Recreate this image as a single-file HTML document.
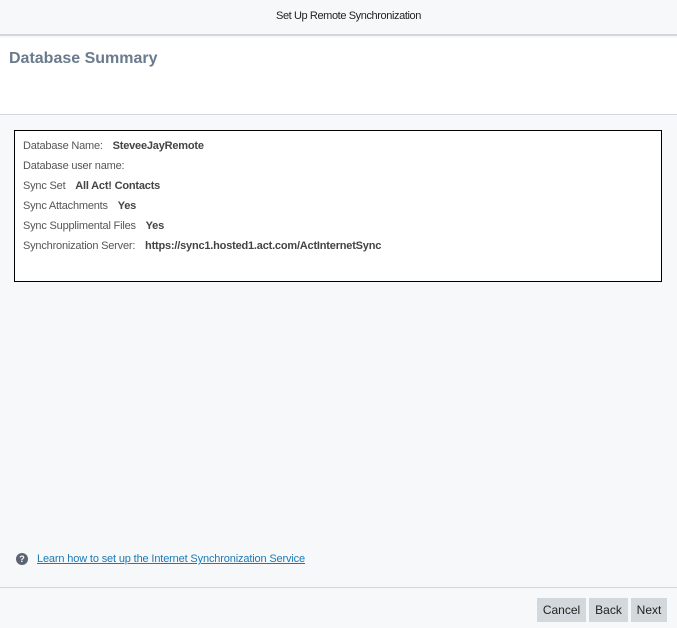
<!DOCTYPE html>
<html><head><style>
*{margin:0;padding:0;box-sizing:border-box}
body{width:677px;height:628px;background:#f7f8fa;font-family:"Liberation Sans",Arial,sans-serif;position:relative;overflow:hidden}
.hdr{position:absolute;left:0;top:0;width:677px;height:36px;background:#f7f8fa;border-bottom:2px solid #d4d6d9;text-align:center;font-size:11px;line-height:33px;color:#222;letter-spacing:-0.4px;padding-left:20px}
.white{position:absolute;left:0;top:38px;width:677px;height:77px;background:#fff;border-bottom:1px solid #d4d8dc}
.white h1{position:absolute;left:9px;top:12px;font-size:16px;font-weight:bold;color:#6b7a8c}
.box{position:absolute;left:14px;top:130px;width:648px;height:152px;border:1px solid #000;background:#fff}
.row{position:absolute;left:8px;font-size:11px;color:#555;white-space:nowrap;letter-spacing:-0.2px}
.row b{color:#444;margin-left:7px}
.link{position:absolute;left:37px;top:553px;font-size:11px;color:#1a7ab8;text-decoration:underline;letter-spacing:-0.15px}
.ic{position:absolute;left:16px;top:553px;width:12px;height:12px;border-radius:50%;background:#5b6570;color:#fff;font-size:9px;font-weight:bold;text-align:center;line-height:12px}
.sep{position:absolute;left:0;top:587px;width:677px;height:1px;background:#d4d6d9}
.btn{position:absolute;top:598px;height:24px;background:#d3d8dc;font-size:12px;color:#222;text-align:center;line-height:24px}
</style></head><body>
<div class="hdr">Set Up Remote Synchronization</div>
<div class="white"><h1>Database Summary</h1></div>
<div class="box">
<div class="row" style="top:9px">Database Name: <b>SteveeJayRemote</b></div>
<div class="row" style="top:29px">Database user name:</div>
<div class="row" style="top:49px">Sync Set <b>All Act! Contacts</b></div>
<div class="row" style="top:69px">Sync Attachments <b>Yes</b></div>
<div class="row" style="top:89px">Sync Supplimental Files <b>Yes</b></div>
<div class="row" style="top:109px">Synchronization Server: <b>https://sync1.hosted1.act.com/ActInternetSync</b></div>
</div>
<div class="ic">?</div>
<div class="link">Learn how to set up the Internet Synchronization Service</div>
<div class="sep"></div>
<div class="btn" style="left:537px;width:49px">Cancel</div>
<div class="btn" style="left:589px;width:39px">Back</div>
<div class="btn" style="left:631px;width:36px">Next</div>
</body></html>
